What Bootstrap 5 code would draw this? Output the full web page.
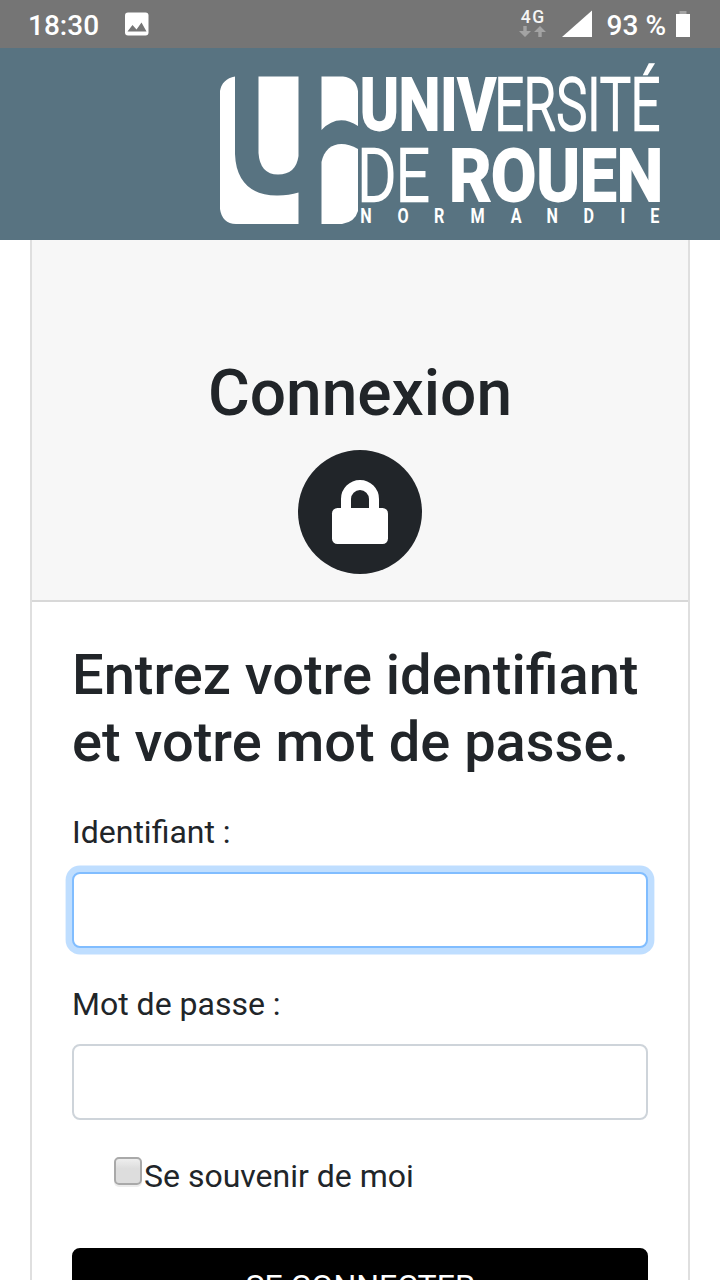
<!DOCTYPE html>
<html lang="fr">
<head>
<meta charset="utf-8">
<meta name="viewport" content="width=device-width, initial-scale=1">
<title>Connexion</title>
<link href="https://cdn.jsdelivr.net/npm/bootstrap@5.3.0/dist/css/bootstrap.min.css" rel="stylesheet">
<style>
html { font-size: 32px; }
body { font-family: Roboto, "Noto Sans", sans-serif; color: #212529; height: 1280px; overflow: hidden; }
.status-bar { height: 48px; background: #757575; color: #fff; font-size: 28px; font-weight: 500; line-height: 52px; padding: 0 30px 0 28px; }
.status-bar svg, .site-head svg, .lock-icon { display: block; flex: none; }
.signal-icons { margin-right: 15px; }
.site-head { height: 192px; background: #587381; }
.login-card { margin: 0 30px; width: 660px; border: 2px solid #dfdfdf; border-width: 0 2px; border-radius: 0; height: 1040px; overflow: hidden; }
.login-head { flex: none; height: 362px; padding: 115px 40px 0; background: #f7f7f7; border-bottom: 2px solid #d8d8d8; border-radius: 0 !important; }
.login-head h1 { font-size: 64px; line-height: 77px; margin-bottom: 18px; }
.login-body { padding: 40px; }
.login-body h2 { font-size: 56px; line-height: 67.2px; margin-bottom: 31.6px; white-space: nowrap; }
.login-body .form-label { display: block; line-height: 48px; margin-bottom: 16px; }
.login-body .form-control { height: 76px; border: 2px solid #ced4da; border-radius: 8px; margin-bottom: 32px; }
.login-body .form-control.active-field { border-color: #80bdff; box-shadow: 0 0 0 6.4px rgba(0,123,255,.25); }
.remember { height: 48px; padding-left: 42px; margin-bottom: 48px; line-height: 48px; }
.remember input { appearance: none; width: 28px; height: 28px; margin: 5px 2px 0 0; border: 2px solid #a9a9a9; border-radius: 5px; background: linear-gradient(#eee, #ddd 40%, #ddd); box-shadow: 0 2px 0 #ececec; }
.btn-login { background: #000; color: #fff; border: 2px solid #000; border-radius: 8px; font-size: 32px; line-height: 48px; padding: 12px; }
</style>
</head>
<body>
<div class="status-bar d-flex justify-content-between">
  <div class="d-flex">
    <span>18:30</span>
    <svg width="24" height="24" viewBox="0 0 24 24" style="margin:12px 0 0 26px"><rect x="0" y="0.500" width="23.500" height="23" rx="3" fill="#fff"/><path d="M2.500 19.500l5-6.500 4 4.500 5-7 5 9z" fill="#757575"/></svg>
  </div>
  <div class="d-flex">
    <svg class="signal-icons" width="73" height="48" viewBox="519 0 73 48">
      <text x="520.800" y="23.300" font-size="17.500" font-weight="500" fill="#f5f5f5" letter-spacing="1.500">4G</text>
      <path d="M523.300 26h3.400v5h4.300l-6 6-6-6h4.300zM538.300 37h3.400v-5h4.300l-6-6-6 6h4.300z" fill="#a3a3a3"/>
      <path d="M562 37L592 10.500V37z" fill="#fff"/>
    </svg>
    <span>93 %</span>
    <svg width="14" height="48" viewBox="0 0 14 48" style="margin-left:10px"><path d="M3.500 11h7v3h-7z" fill="#a3a3a3"/><path d="M0 14h14v23H0z" fill="#fff"/></svg>
  </div>
</div>
<header class="site-head">
  <svg width="720" height="192" viewBox="0 48 720 192" fill="#fff" font-family="Roboto">
    <path d="M235 76.500V154C236 184 254 196 278 195.500Q289 195.500 298.500 192.500V224H236Q222 223.500 220 209V91Q222 79 235 76.500z"/>
    <path d="M258.500 76.500H298.500V156Q296 174.500 278 174.500Q260 174.500 258.500 153z"/>
    <path d="M321.500 76.500H343Q356 78 358 91V126Q338 113 321.500 130z"/>
    <path d="M321.500 224V162C325 144 341 139 358 149V211Q355 222 342 224z"/>
    <g stroke="#fff">
      <text x="360" y="129.600" font-size="72" font-weight="700" stroke-width="2" textLength="136" lengthAdjust="spacingAndGlyphs">UNIV</text>
      <text x="494.500" y="129.500" font-size="72" font-weight="300" stroke-width="2.600" textLength="165.500" lengthAdjust="spacingAndGlyphs">ERSITÉ</text>
      <text x="357.500" y="201" font-size="72.500" font-weight="300" stroke-width="2.600" textLength="72" lengthAdjust="spacingAndGlyphs">DE</text>
      <text x="449" y="201" font-size="72.500" font-weight="700" stroke-width="2" textLength="214" lengthAdjust="spacingAndGlyphs">ROUEN</text>
    </g>
    <text transform="translate(0 222.800) scale(.83 1)" font-size="19.500" font-weight="700" x="434 479 523 567 615.500 658.500 703 747.500 783.500">NORMANDIE</text>
  </svg>
</header>
<main class="card login-card">
  <div class="card-header login-head d-flex flex-column align-items-center">
    <h1>Connexion</h1>
    <svg class="lock-icon" width="124" height="124" viewBox="0 0 124 124"><circle cx="62" cy="62" r="62" fill="#212529"/><rect x="34" y="58" width="56" height="36" rx="5.500" fill="#fff"/><path d="M48 60V49a14 14 0 0 1 28 0V60" fill="none" stroke="#fff" stroke-width="10"/></svg>
  </div>
  <form class="card-body login-body">
    <h2>Entrez votre identifiant<br>et votre mot de passe.</h2>
    <label class="form-label" for="username">Identifiant :</label>
    <input class="form-control active-field" id="username" type="text">
    <label class="form-label" for="password">Mot de passe :</label>
    <input class="form-control" id="password" type="password">
    <label class="remember d-flex"><input type="checkbox"><span>Se souvenir de moi</span></label>
    <button class="btn btn-login w-100" type="button">SE CONNECTER</button>
  </form>
</main>
<script src="https://cdn.jsdelivr.net/npm/bootstrap@5.3.0/dist/js/bootstrap.bundle.min.js"></script>
</body>
</html>
